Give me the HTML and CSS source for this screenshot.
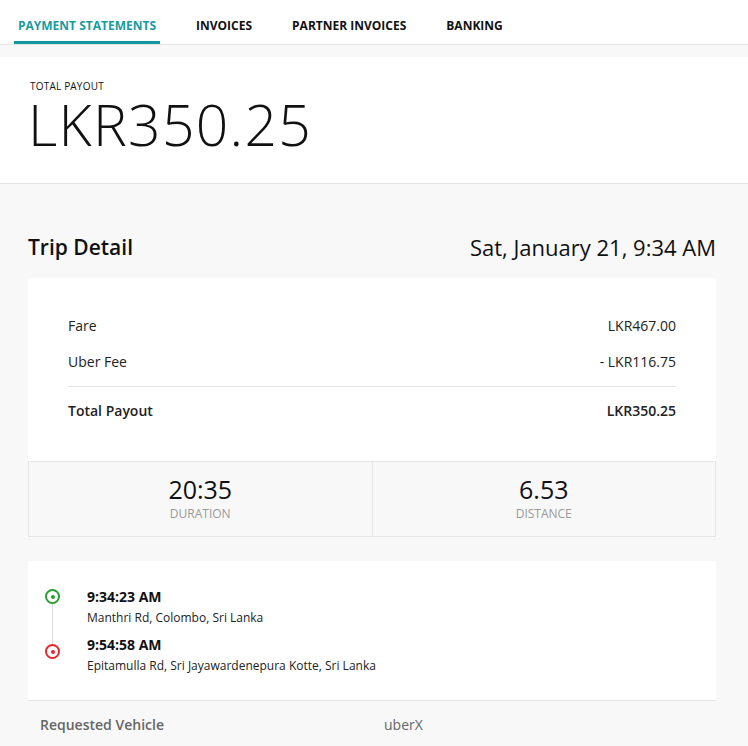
FILE: index.html
```html
<!DOCTYPE html>
<html lang="en">
<head>
  <meta charset="UTF-8" />
  <meta name="viewport" content="width=device-width, initial-scale=1.0" />
  <title>Payment Statements</title>
  <link rel="stylesheet" href="styles.css">
</head>
<body>

<!-- Top tabs -->
<nav class="tabs">
  <a class="tab active" href="#">Payment Statements</a>
  <a class="tab" href="#">Invoices</a>
  <a class="tab" href="#">Partner Invoices</a>
  <a class="tab" href="#">Banking</a>
</nav>

<div class="page">

  <!-- Total payout -->
  <section class="payout">
    <div class="payout-label">Total Payout</div>
    <div class="payout-amount">LKR350.25</div>
  </section>

  <section class="trip">
    <div class="trip-head">
      <h2>Trip Detail</h2>
      <div class="trip-date">Sat, January 21, 9:34 AM</div>
    </div>

    <!-- Fare breakdown -->
    <div class="card">
      <div class="fare-list">
        <div class="fare-row"><span>Fare</span><span>LKR467.00</span></div>
        <div class="fare-row"><span>Uber Fee</span><span>- LKR116.75</span></div>
        <div class="fare-row total"><span>Total Payout</span><span>LKR350.25</span></div>
      </div>
      <div class="stats">
        <div class="stat">
          <div class="stat-value">20:35</div>
          <div class="stat-label">Duration</div>
        </div>
        <div class="stat">
          <div class="stat-value">6.53</div>
          <div class="stat-label">Distance</div>
        </div>
      </div>
    </div>

    <!-- Route -->
    <div class="card route-card">
      <div class="route">
        <div class="stop pickup">
          <span class="dot"></span>
          <div class="stop-time">9:34:23 AM</div>
          <div class="stop-place">Manthri Rd, Colombo, Sri Lanka</div>
        </div>
        <div class="stop dropoff">
          <span class="dot"></span>
          <div class="stop-time">9:54:58 AM</div>
          <div class="stop-place">Epitamulla Rd, Sri Jayawardenepura Kotte, Sri Lanka</div>
        </div>
      </div>
    </div>
    <div class="detail-row">
      <span class="detail-label">Requested Vehicle</span>
      <span class="detail-value">uberX</span>
    </div>
  </section>

</div>

</body>
</html>
```

FILE: styles.css
```css
/* =========================
   General Page Styling
   ========================= */
body {
  font-family: "Open Sans", "Liberation Sans", sans-serif;
  background-color: #f8f8f8;
  color: #111;
  margin: 0;
  padding: 0;
}

/* =========================
   Tabs
   ========================= */
.tabs {
  display: flex;
  gap: 32px;
  height: 45px;
  padding-left: 14px;
  background-color: #fff;
  border-bottom: 1px solid #e5e5e5;
  box-sizing: border-box;
}

.tab {
  display: flex;
  align-items: center;
  padding: 10px 4px 0;
  font-size: 12px;
  font-weight: 700;
  text-transform: uppercase;
  text-decoration: none;
  color: #111;
  border-bottom: 3px solid transparent;
}

.tab.active {
  color: #1a9ba0;
  border-bottom-color: #11979c;
}

/* =========================
   Total Payout
   ========================= */
.page {
  padding-top: 12px;
}

.payout {
  background-color: #fff;
  padding: 22px 30px 27px;
  border-bottom: 1px solid #e5e5e5;
}

.payout-label {
  font-size: 10px;
  line-height: 14px;
  text-transform: uppercase;
  letter-spacing: 0.2px;
}

.payout-amount {
  font-size: 57px;
  font-weight: 300;
  line-height: 56px;
  margin-top: 3px;
  padding-bottom: 4px;
  letter-spacing: 1.3px;
  margin-left: -2px;
}

/* =========================
   Trip Detail
   ========================= */
.trip {
  padding: 48px 32px 0 28px;
}

.trip-head {
  display: flex;
  justify-content: space-between;
  align-items: center;
  margin-bottom: 16px;
}

.trip-head h2 {
  margin: 0;
  font-size: 21px;
  font-weight: 600;
}

.trip-date {
  font-size: 22px;
}

.card {
  background-color: #fff;
  margin-bottom: 24px;
}

.fare-list {
  padding: 38px 40px 40px;
}

.fare-row {
  display: flex;
  justify-content: space-between;
  font-size: 14px;
  line-height: 20px;
  color: #222;
}

.fare-row + .fare-row {
  margin-top: 16px;
}

.fare-row.total {
  font-weight: 600;
  border-top: 1px solid #e5e5e5;
  padding-top: 14px;
  margin-top: 14px;
}

.stats {
  display: flex;
  background-color: #f8f8f8;
  border: 1px solid #e5e5e5;
}

.stat {
  flex: 1;
  text-align: center;
  padding: 12px 0 14px;
}

.stat + .stat {
  border-left: 1px solid #e5e5e5;
}

.stat-value {
  font-size: 25px;
  line-height: 30px;
}

.stat-label {
  font-size: 12px;
  line-height: 16px;
  margin-top: 2px;
  color: #999;
  text-transform: uppercase;
}

/* =========================
   Route
   ========================= */
.route-card {
  margin-bottom: 0;
}

.route {
  padding: 26px 0 17px 59px;
}

.stop {
  position: relative;
  margin-bottom: 7px;
}

.stop-time {
  font-size: 14px;
  font-weight: 700;
  line-height: 20px;
}

.stop-place {
  font-size: 12px;
  line-height: 20px;
  margin-top: 1px;
  color: #222;
}

.dot {
  position: absolute;
  left: -42px;
  top: 2px;
  width: 15px;
  height: 15px;
  border: 2px solid #2a9d33;
  border-radius: 50%;
  background: #fff;
  box-sizing: border-box;
  z-index: 1;
}

.dot::after {
  content: "";
  position: absolute;
  left: 3.5px;
  top: 3.5px;
  width: 4px;
  height: 4px;
  border-radius: 50%;
  background-color: #2a9d33;
}

.dropoff .dot {
  top: 9px;
  border-color: #e8262b;
}

.dropoff .dot::after {
  background-color: #e8262b;
}

.pickup::before {
  content: "";
  position: absolute;
  left: -35px;
  top: 14px;
  width: 1px;
  height: 50px;
  background-color: #ddd;
}

.detail-row {
  display: flex;
  border-top: 1px solid #e5e5e5;
  padding: 14px 12px;
  font-size: 14px;
}

.detail-label {
  width: 344px;
  font-weight: 600;
  color: #666;
}

.detail-value {
  color: #666;
}
```
